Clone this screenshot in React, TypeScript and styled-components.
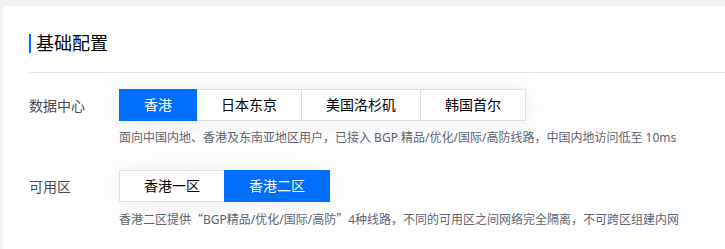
import React, { useState } from 'react';
import styled, { createGlobalStyle } from 'styled-components';

const GlobalStyle = createGlobalStyle`
  html, body {
    margin: 0;
    padding: 0;
    background-color: #f0f2f5;
    overflow: hidden;
  }
  body {
    font-family: 'Noto Sans', 'Noto Sans CJK SC', sans-serif;
    -webkit-font-smoothing: antialiased;
  }
`;

const Page = styled.div`
  padding: 6px 0 0 3px;
  height: 249px;
  box-sizing: border-box;
`;

const Card = styled.div`
  background-color: #ffffff;
  padding: 0 0 0 26px;
  height: 100%;
  box-sizing: border-box;
`;

const Header = styled.div`
  display: flex;
  align-items: center;
  padding: 28px 0 19px;
  border-bottom: 1px solid #e2e3e6;
`;

const Title = styled.h2`
  margin: 0;
  padding-left: 5px;
  border-left: 2px solid #006eff;
  font-size: 18px;
  font-weight: 400;
  line-height: 19px;
  color: #000000;
`;

const Body = styled.div`
  display: flex;
  flex-direction: column;
  gap: 22px;
  padding-top: 16px;
`;

const Row = styled.div`
  display: grid;
  grid-template-columns: 90px 1fr;
  align-items: start;
`;

const Label = styled.div`
  height: 32px;
  display: flex;
  align-items: center;
  font-size: 14px;
  color: #444a57;
`;

const Field = styled.div`
  display: flex;
  flex-direction: column;
  align-items: flex-start;
`;

const Segment = styled.div`
  display: inline-flex;
  box-shadow: 0 2px 28px rgba(54, 58, 80, 0.1);
`;

const SegButton = styled.button<{ $active: boolean }>`
  height: 32px;
  padding: 0 24px;
  margin-left: -1px;
  border: 1px solid ${(p) => (p.$active ? '#006eff' : '#dddfe3')};
  background-color: ${(p) => (p.$active ? '#006eff' : '#ffffff')};
  color: ${(p) => (p.$active ? '#ffffff' : '#000000')};
  font-family: 'Noto Sans', 'Noto Sans CJK SC', sans-serif;
  font-size: 14px;
  line-height: 30px;
  cursor: pointer;
  position: relative;
  z-index: ${(p) => (p.$active ? 1 : 0)};

  &:first-child {
    margin-left: 0;
  }
`;

const Desc = styled.p`
  margin: 7px 0 0;
  font-size: 12px;
  line-height: 20px;
  color: #5f6370;
  white-space: nowrap;
`;

const Quote = styled.span`
  font-family: 'Noto Sans CJK SC', sans-serif;
`;

const regions = ['香港', '日本东京', '美国洛杉矶', '韩国首尔'];
const zones = ['香港一区', '香港二区'];

const App = () => {
  const [region, setRegion] = useState('香港');
  const [zone, setZone] = useState('香港二区');

  return (
    <Page>
      <GlobalStyle />
      <Card>
        <Header>
          <Title>基础配置</Title>
        </Header>
        <Body>
          <Row>
            <Label>数据中心</Label>
            <Field>
              <Segment>
                {regions.map((r) => (
                  <SegButton key={r} $active={region === r} onClick={() => setRegion(r)}>
                    {r}
                  </SegButton>
                ))}
              </Segment>
              <Desc>
                面向中国内地、香港及东南亚地区用户，已接入 BGP 精品/优化/国际/高防线路，中国内地访问低至 10ms
              </Desc>
            </Field>
          </Row>
          <Row>
            <Label>可用区</Label>
            <Field>
              <Segment>
                {zones.map((z) => (
                  <SegButton key={z} $active={zone === z} onClick={() => setZone(z)}>
                    {z}
                  </SegButton>
                ))}
              </Segment>
              <Desc>
                香港二区提供<Quote>“</Quote>BGP精品/优化/国际/高防<Quote>”</Quote>4种线路，不同的可用区之间网络完全隔离，不可跨区组建内网
              </Desc>
            </Field>
          </Row>
        </Body>
      </Card>
    </Page>
  );
};

export default App;
